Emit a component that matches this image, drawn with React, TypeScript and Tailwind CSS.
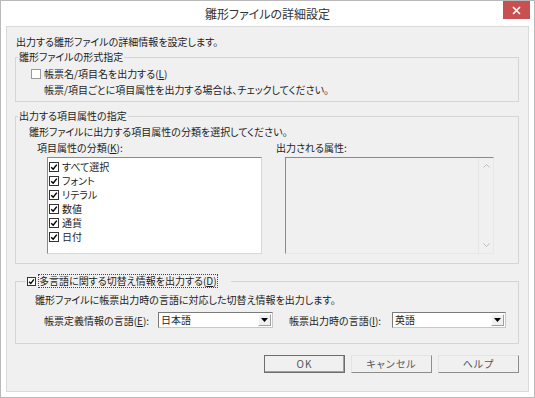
import React from "react";

function Box({ checked, size = 10, light }: { checked?: boolean; size?: number; light?: boolean }) {
  return (
    <span
      className={`flex items-center justify-center border ${light ? "border-[#9a9a9a]" : "border-[#333]"} bg-white shrink-0`}
      style={{ width: size, height: size }}
    >
      {checked && (
        <svg width={size - 2} height={size - 2} viewBox="0 0 8 8">
          <path d="M1.2 4.2 L3.2 6.2 L6.8 1.6" stroke="#000" strokeWidth="1.5" fill="none" />
        </svg>
      )}
    </span>
  );
}

function Combo({ value, w }: { value: string; w: string }) {
  return (
    <div className={`${w} h-[16px] bg-white border border-t-[#7a7a7a] border-l-[#7a7a7a] border-r-[#c8c8c8] border-b-[#c8c8c8] flex items-center`}>
      <span className="flex-1 pl-[2px] leading-[14px]">{value}</span>
      <span className="w-[13px] h-[12px] mr-[1px] flex items-center justify-center border border-t-white border-l-white border-r-[#a0a0a0] border-b-[#a0a0a0] bg-[#f0f0f0]">
        <svg width="7" height="4" viewBox="0 0 7 4">
          <path d="M0 0 H7 L3.5 4 Z" fill="#000" />
        </svg>
      </span>
    </div>
  );
}

function Btn({ label, def }: { label: string; def?: boolean }) {
  return (
    <div
      className={`w-[81px] h-[18px] ${
        def
          ? "border border-[#6e6e6e] shadow-[inset_-1px_-1px_0_#a0a0a0]"
          : "border border-t-[#e3e3e3] border-l-[#e3e3e3] border-r-[#8d8d8d] border-b-[#8d8d8d]"
      } bg-[#f0f0f0] flex items-center justify-center`}
    >
      <span className="text-[#555] leading-none tracking-[1px]">{label}</span>
    </div>
  );
}

const items = ["すべて選択", "フォント", "リテラル", "数値", "通貨", "日付"];

export default function App() {
  return (
    <div className="w-[535px] h-[398px] bg-white border border-[#b9b9b9] flex flex-col text-[10px] text-[#1e1e1e] whitespace-nowrap font-['Noto_Sans_CJK_JP',sans-serif] [font-feature-settings:'palt']">
      {/* title bar */}
      <div className="relative h-[25px] flex items-center justify-center">
        <span className="text-[12px] text-[#333] leading-none">雛形ファイルの詳細設定</span>
        <div className="absolute top-0 right-[4px] w-[27px] h-[18px] bg-[#c75050] flex items-center justify-center">
          <svg width="9" height="9" viewBox="0 0 9 9">
            <path d="M1 1 L8 8 M8 1 L1 8" stroke="#fff" strokeWidth="1.6" />
          </svg>
        </div>
      </div>

      {/* client */}
      <div className="mx-[5px] h-[366px] border border-[#d9d9d9] bg-[#f0f0f0] flex flex-col pl-[8px] pr-[9px] pt-[7px]">
        <p className="h-[15px] leading-[15px] pl-[1px]">出力する雛形ファイルの詳細情報を設定します。</p>

        <fieldset className="border border-[#d5d5d5] pb-[3px]">
          <legend className="ml-[2px] px-[1px] h-[16px] leading-[16px]">雛形ファイルの形式指定</legend>
          <div className="h-[17px] flex items-center pl-[15px] gap-[3px]">
            <Box light />
            <span>
              帳票名/項目名を出力する(<span className="underline">L</span>)
            </span>
          </div>
          <div className="h-[16px] leading-[16px] pl-[28px]">
            帳票/項目ごとに項目属性を出力する場合は、チェックしてください。
          </div>
        </fieldset>

        <fieldset className="mt-[6px] border border-[#d5d5d5] pb-[9px]">
          <legend className="ml-[2px] px-[1px] h-[16px] leading-[16px]">出力する項目属性の指定</legend>
          <div className="h-[15px] leading-[15px] pl-[13px]">
            雛形ファイルに出力する項目属性の分類を選択してください。
          </div>
          <div className="flex pl-[21px]">
            <div className="w-[239px] flex flex-col">
              <div className="h-[18px] leading-[18px]">
                項目属性の分類(<span className="underline">K</span>):
              </div>
              <div className="ml-[10px] w-[215px] h-[97px] bg-white border border-t-[#8a8a8a] border-l-[#8a8a8a] border-r-[#d8d8d8] border-b-[#d8d8d8] pt-[2px] pl-[1px]">
                {items.map((t) => (
                  <div key={t} className="h-[14px] flex items-center gap-[3px]">
                    <Box checked />
                    <span className="leading-[14px]">{t}</span>
                  </div>
                ))}
              </div>
            </div>
            <div className="flex flex-col">
              <div className="h-[18px] leading-[18px]">出力される属性:</div>
              <div className="ml-[9px] w-[209px] h-[97px] border border-t-[#8a8a8a] border-l-[#8a8a8a] border-r-[#e8e8e8] border-b-[#e8e8e8] flex justify-end">
                <div className="w-[15px] h-full border-l border-[#e6e6e6] flex flex-col items-center justify-between py-[6px]">
                  <svg width="7" height="4" viewBox="0 0 7 4">
                    <path d="M0.5 3.5 L3.5 0.5 L6.5 3.5" stroke="#bdbdbd" fill="none" />
                  </svg>
                  <svg width="7" height="4" viewBox="0 0 7 4">
                    <path d="M0.5 0.5 L3.5 3.5 L6.5 0.5" stroke="#bdbdbd" fill="none" />
                  </svg>
                </div>
              </div>
            </div>
          </div>
        </fieldset>

        <fieldset className="mt-[9px] border border-[#d5d5d5] pb-[15px]">
          <legend className="ml-[10px] pl-[1px] pr-[14px] h-[16px] flex items-center gap-[3px]">
            <Box checked size={9} />
            <span className="leading-[12px] outline outline-1 outline-dotted outline-[#444]">
              多言語に関する切替え情報を出力する(<span className="underline">D</span>)
            </span>
          </legend>
          <div className="h-[20px] flex items-center pl-[19px]">
            雛形ファイルに帳票出力時の言語に対応した切替え情報を出力します。
          </div>
          <div className="mt-[3px] h-[16px] flex items-center pl-[28px]">
            <span className="w-[114px]">
              帳票定義情報の言語(<span className="underline">E</span>):
            </span>
            <Combo value="日本語" w="w-[115px]" />
            <span className="ml-[16px] w-[103px]">
              帳票出力時の言語(<span className="underline">I</span>):
            </span>
            <Combo value="英語" w="w-[114px]" />
          </div>
        </fieldset>

        <div className="mt-[11px] flex justify-end gap-[6px]">
          <Btn label="OK" def />
          <Btn label="キャンセル" />
          <Btn label="ヘルプ" />
        </div>
      </div>
    </div>
  );
}
